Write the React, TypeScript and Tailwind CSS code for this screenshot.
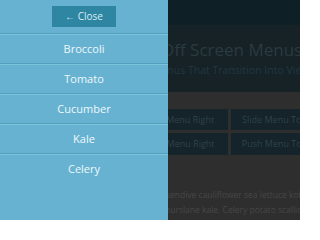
const veggies = ["Broccoli", "Tomato", "Cucumber", "Kale", "Celery"];

const buttons = [
  ["Slide Menu Right", "Slide Menu Top"],
  ["Push Menu Right", "Push Menu Top"],
];

const App = () => {
  return (
    <div className="relative w-[300px] h-[220px] overflow-hidden bg-[#2e2e2e] font-['Open_Sans',sans-serif]">
      {/* page behind the menu, already dimmed */}
      <div className="w-[300px]">
        <div className="h-[25px] bg-[#0e1f26]" />
        <div className="h-[67px] bg-[#172226] pt-[15px]">
          <h1 className="pl-[161px] whitespace-nowrap text-[17px] leading-[20px] text-[#2b3a3e]">
            Off Screen Menus
          </h1>
          <p className="mt-[3px] pl-[152px] whitespace-nowrap text-[10.5px] leading-[14px] text-[#1f3843]">
            Menus That Transition Into View
          </p>
        </div>

        <div className="pt-[17px] pl-[130px] flex flex-col gap-[3px]">
          {buttons.map((row, i) => (
            <div key={i} className="grid grid-cols-[98px_87px] gap-[3px]">
              {row.map((label) => (
                <div
                  key={label}
                  className={`${i === 0 ? "h-[21px]" : "h-[22px]"} flex items-center justify-center whitespace-nowrap bg-[#15242a] text-[9px] text-[#2e4349]`}
                >
                  {label}
                </div>
              ))}
            </div>
          ))}
        </div>

        <div className="mt-[32px] text-[8.5px] leading-[15px] text-[#474747]">
          <div className="flex whitespace-nowrap">
            <span className="w-[170px] shrink-0 overflow-hidden text-right">
              Nori grape silver beet broccoli kombu
            </span>
            <span> endive cauliflower sea lettuce kohlrabi amaranth</span>
          </div>
          <div className="flex whitespace-nowrap">
            <span className="w-[165px] shrink-0 overflow-hidden text-right">
              Parsley shallot courgette tatsoi winter
            </span>
            <span> purslane kale. Celery potato scallion desert raisin</span>
          </div>
        </div>
      </div>

      {/* off screen menu */}
      <nav className="absolute inset-y-0 left-0 w-[168px] bg-[#66b2d0]">
        <div className="flex justify-center py-[6px]">
          <button className="w-[64px] h-[21px] bg-[#2e86a3] text-[10px] text-[#d8edf5]">
            ← Close
          </button>
        </div>
        <ul>
          {veggies.map((veg) => (
            <li
              key={veg}
              className="h-[30px] flex items-center justify-center pt-[2px] border-t border-[#549fbd] shadow-[inset_0_1px_0_#7cc3dc] text-[11px] text-[#eef8fc]"
            >
              {veg}
            </li>
          ))}
        </ul>
      </nav>
    </div>
  );
};

export default App;
